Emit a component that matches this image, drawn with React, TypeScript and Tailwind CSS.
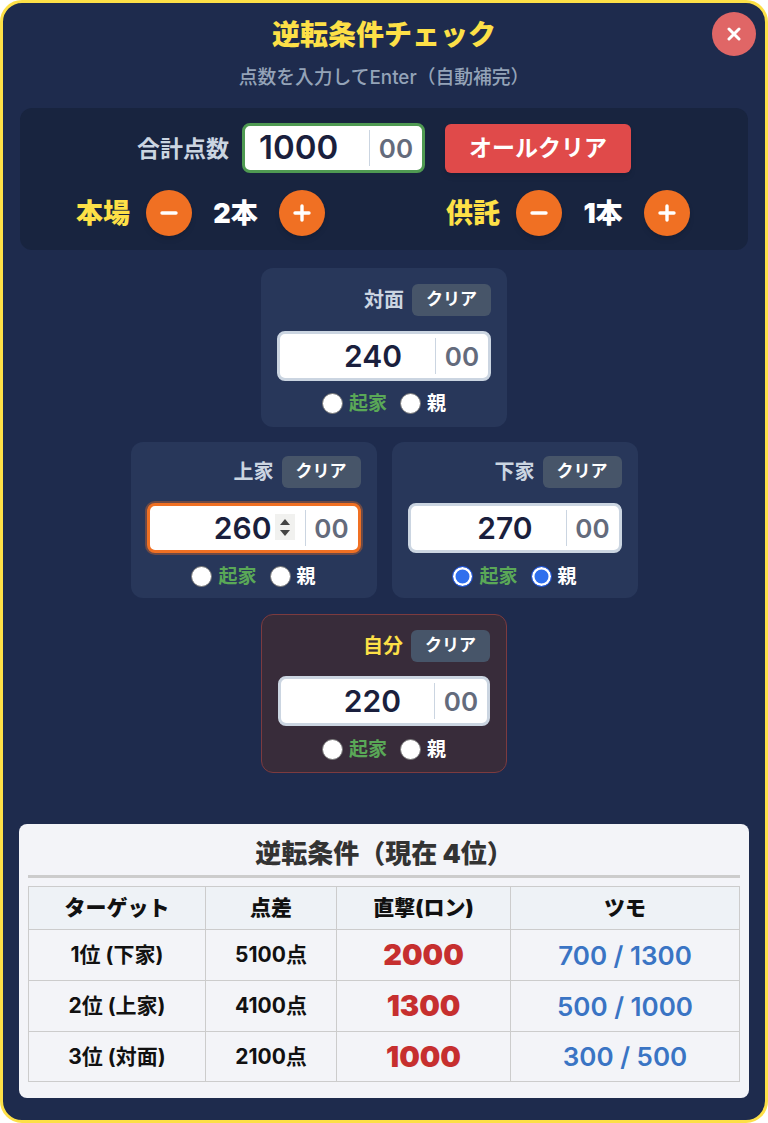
const font = { fontFamily: '"Inter", "Noto Sans CJK JP", sans-serif' };

const RoundButton = ({ label }: { label: string }) => (
  <button className="w-[46px] h-[46px] rounded-full bg-[#f07023] text-white flex items-center justify-center shadow-md">
    <svg width="18" height="18" viewBox="0 0 18 18" fill="none" stroke="currentColor" strokeWidth="3.4" strokeLinecap="round">
      <path d="M2 9h14" />
      {label === "+" && <path d="M9 2v14" />}
    </svg>
  </button>
);

const Counter = ({ label, value, className, valueClass }: { label: string; value: string; className?: string; valueClass: string }) => (
  <div className={`flex items-center ${className}`}>
    <span className="text-[27px] font-black text-[#fde047] leading-none w-[55px]">{label}</span>
    <span className="ml-[15px]"><RoundButton label="-" /></span>
    <span className={`${valueClass} text-center text-[27px] font-black text-white leading-none`}>{value}</span>
    <RoundButton label="+" />
  </div>
);

const Radio = ({ checked }: { checked?: boolean }) => (
  <span className={`w-[21px] h-[21px] rounded-full border-[1.5px] ${checked ? "bg-[#2f6fed] border-[#2456d6] shadow-[inset_0_0_0_2.5px_#fff]" : "bg-white border-[#767676]"}`}></span>
);

const PointInput = ({ value, active }: { value: string; active?: boolean }) => (
  <div className={`relative flex h-[50px] w-full rounded-lg bg-white border-[3px] ${active ? "border-[#f07023] shadow-[0_0_0_2px_rgba(240,112,35,0.35)]" : "border-[#cbd5e1]"}`}>
    <input readOnly value={value} className="min-w-0 flex-1 bg-transparent text-right pr-[33px] text-[30px] font-semibold text-[#1a1f3d] outline-none" />
    {active && (
      <span className="absolute right-[63px] top-[8px] w-[20px] h-[26px] bg-[#f1f1ef] flex flex-col items-center justify-center gap-[5px]">
        <svg width="10" height="6" viewBox="0 0 10 6" fill="#444"><path d="M5 0l5 6H0z" /></svg>
        <svg width="10" height="6" viewBox="0 0 10 6" fill="#444"><path d="M5 6L0 0h10z" /></svg>
      </span>
    )}
    <span className="w-[53px] my-[4px] border-l border-[#cbd5e1] flex items-center justify-center text-[26px] font-semibold text-[#646b7c]">00</span>
  </div>
);

const PlayerCard = ({ name, value, active, checked, self, compact }: { name: string; value: string; active?: boolean; checked?: boolean; self?: boolean; compact?: boolean }) => (
  <div className={`w-[246px] rounded-xl px-[16px] ${self ? "pt-[15px] pb-[12px] bg-[#382c3a] border border-[#7c3b3f]" : compact ? "pt-[14px] pb-[11px] bg-[#28375a]" : "pt-[16px] pb-[13px] bg-[#28375a]"}`}>
    <div className="flex items-center justify-end gap-[8px]">
      <span className={`text-[20px] font-bold ${self ? "text-[#fde047]" : "text-[#cbd5e1]"}`}>{name}</span>
      <button className="w-[79px] h-[32px] rounded-md bg-[#475569] text-white text-[17px] font-bold">クリア</button>
    </div>
    <div className={self ? "mt-[14px]" : "mt-[15px]"}><PointInput value={value} active={active} /></div>
    <div className={`${compact || self ? "mt-[13px]" : "mt-[12px]"} flex items-center justify-center text-[19px] font-bold leading-none`}>
      <Radio checked={checked} />
      <span className="ml-[6px] text-[#5aa857]">起家</span>
      <span className="ml-[13px] flex"><Radio checked={checked} /></span>
      <span className="ml-[6px] text-white">親</span>
    </div>
  </div>
);

const rows = [
  ["1位 (下家)", "5100点", "2000", "700 / 1300", "h-[51px]"],
  ["2位 (上家)", "4100点", "1300", "500 / 1000", "h-[51px]"],
  ["3位 (対面)", "2100点", "1000", "300 / 500", "h-[50px]"],
];

export default function App() {
  return (
    <div className="w-[768px] h-[1123px] bg-white" style={font}>
      <div className="relative w-full h-full rounded-[22px] border-[3px] border-[#fde047] bg-[#1e2b4d] overflow-hidden flex flex-col items-center">
        <button className="absolute right-[9px] top-[9px] w-[44px] h-[44px] rounded-full bg-[#e06666] text-white flex items-center justify-center">
          <svg width="14" height="14" viewBox="0 0 14 14" fill="none" stroke="currentColor" strokeWidth="3" strokeLinecap="round"><path d="M2 2l10 10M12 2L2 12" /></svg>
        </button>

        <h1 className="mt-[13px] text-[28px] leading-[38px] font-black text-[#fde047]">逆転条件チェック</h1>
        <p className="mt-[11px] text-[18.8px] leading-[26px] font-medium text-[#94a3b8]">点数を入力してEnter（自動補完）</p>

        <div className="mt-[17px] w-[728px] h-[142px] rounded-xl bg-[#18243f] pt-[15px]">
          <div className="flex items-center">
            <span className="ml-[117px] pt-[2px] text-[23px] font-bold text-[#cbd5e1] leading-none">合計点数</span>
            <div className="ml-[13px] w-[183px] h-[50px] rounded-lg bg-white border-[3px] border-[#4f9a52] flex">
              <input readOnly value="1000" className="min-w-0 flex-1 bg-transparent pl-[14px] text-[33px] font-semibold text-[#1a1f3d] outline-none" />
              <span className="w-[53px] my-[4px] border-l border-[#cbd5e1] flex items-center justify-center text-[26px] font-semibold text-[#646b7c]">00</span>
            </div>
            <button className="ml-[20px] w-[186px] h-[49px] rounded-md bg-[#e04a4a] text-white text-[23px] font-bold shadow-md">オールクリア</button>
          </div>
          <div className="flex mt-[17px]">
            <Counter label="本場" value="2本" className="ml-[56px]" valueClass="w-[87px]" />
            <Counter label="供託" value="1本" className="ml-[121px]" valueClass="w-[82px]" />
          </div>
        </div>

        <div className="mt-[18px]"><PlayerCard name="対面" value="240" /></div>
        <div className="mt-[15px] flex gap-[15px]">
          <PlayerCard name="上家" value="260" active compact />
          <PlayerCard name="下家" value="270" checked compact />
        </div>
        <div className="mt-[16px]"><PlayerCard name="自分" value="220" self /></div>

        <div className="mt-[51px] w-[730px] rounded-lg bg-[#f3f4f8] px-[9px] pt-[11px]">
          <h2 className="h-[43px] text-center text-[26px] leading-[38px] font-black text-[#333] border-b-[3px] border-[#cccccc]">逆転条件（現在 4位）</h2>
          <table className="mt-[8px] w-[711px] table-fixed border-collapse text-center text-[#111]">
            <colgroup>
              <col className="w-[177px]" />
              <col className="w-[131px]" />
              <col className="w-[174px]" />
              <col className="w-[229px]" />
            </colgroup>
            <thead>
              <tr className="h-[43px] bg-[#eef2f6] text-[21px] font-black">
                {["ターゲット", "点差", "直撃(ロン)", "ツモ"].map((h) => (
                  <th key={h} className="border border-[#cccccc] font-black">{h}</th>
                ))}
              </tr>
            </thead>
            <tbody>
              {rows.map((r) => (
                <tr key={r[0]} className={r[4]}>
                  <td className="border border-[#cccccc] text-[21px] font-bold">{r[0]}</td>
                  <td className="border border-[#cccccc] text-[21px] font-bold">{r[1]}</td>
                  <td className="border border-[#cccccc] text-[29px] font-black text-[#c62f2f]">{r[2]}</td>
                  <td className="border border-[#cccccc] text-[26px] font-semibold text-[#3a74c4]">{r[3]}</td>
                </tr>
              ))}
            </tbody>
          </table>
          <div className="h-[16px]"></div>
        </div>
      </div>
    </div>
  );
}
